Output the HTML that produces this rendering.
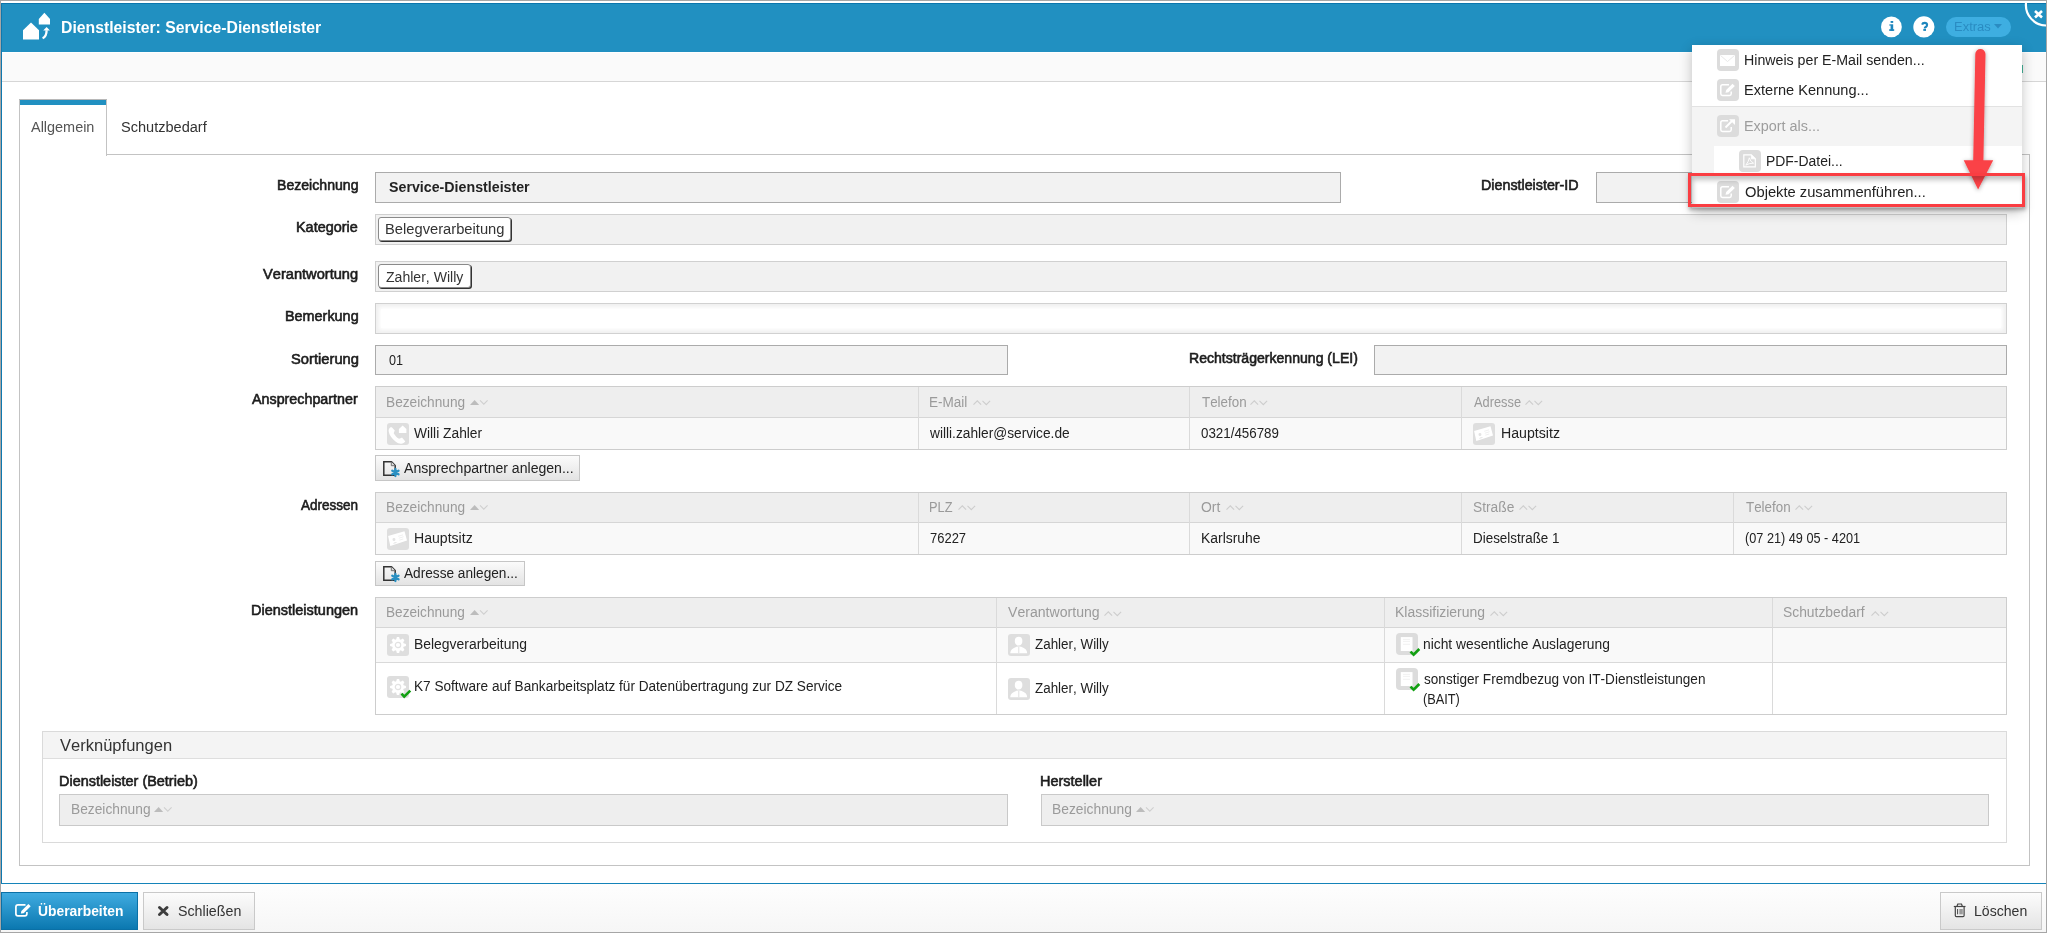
<!DOCTYPE html><html><head><meta charset="utf-8"><style>
html,body{margin:0;padding:0;}
body{width:2047px;height:933px;position:relative;overflow:hidden;background:#fff;font-family:"Liberation Sans",sans-serif;}
.t{position:absolute;white-space:nowrap;transform-origin:0 0;font-kerning:none;}
.b{position:absolute;box-sizing:border-box;}
svg{position:absolute;overflow:visible;}
</style></head><body>
<div class="b" style="left:0px;top:0px;width:2047px;height:933px;border:1px solid #a6a6a6;background:#fff;"></div>
<div class="b" style="left:1px;top:3px;width:2045px;height:49px;background:#2190c1;border-top:1px solid #0b76ad;"></div>
<div class="b" style="left:1px;top:3px;width:1px;height:881px;background:#0e78af;"></div>
<div class="b" style="left:2px;top:52px;width:2044px;height:30px;background:#fafafa;border-top:1px solid #fff;border-bottom:1px solid #d6d6d6;"></div>
<div class="b" style="left:1px;top:883px;width:2045px;height:1px;background:#1483b9;"></div>
<div class="b" style="left:1px;top:884px;width:2045px;height:48px;background:linear-gradient(#fefefe,#f6f6f6);"></div>
<svg style="left:0px;top:0px" width="60" height="50" viewBox="0 0 60 50"><path d="M23 30.2 L31 22.6 L39 30.2 L39 39.5 L23 39.5 Z" fill="#fff"/><path d="M38.8 19 L44.4 12.8 L50 19 L50 24.5 L38.8 24.5 Z" fill="#fff"/><path d="M42.6 38.2 Q46.6 36.5 46.6 30.2" stroke="#fff" stroke-width="2.3" fill="none"/><path d="M43.2 30.6 L46.6 26.9 L49.9 30.6 Z" fill="#fff"/></svg>
<div class="t" style="left:61.15px;top:16.50px;font-size:16.57px;line-height:22px;font-weight:700;color:#fff;transform:scaleX(0.9513);">Dienstleister: Service-Dienstleister</div>
<svg style="left:1870px;top:5px" width="180" height="50" viewBox="0 0 180 50"><circle cx="21.4" cy="21.9" r="10.4" fill="#fff"/><circle cx="53.9" cy="21.9" r="10.6" fill="#fff"/><rect x="76" y="12" width="65" height="20" rx="10" fill="#3eaee1"/></svg>
<svg style="left:1870px;top:0px" width="70" height="40" viewBox="0 0 70 40"><g fill="#1d86bd"><rect x="20.6" y="21" width="2.6" height="1.9"/><rect x="20.6" y="24.3" width="2.6" height="6.6"/><rect x="19.4" y="24.3" width="1.4" height="1.4"/><rect x="19.2" y="29.2" width="5" height="1.7"/><rect x="53.3" y="29" width="2.7" height="1.9"/></g><path d="M52.1 24.6 Q52.6 22.9 54.7 22.9 Q56.9 22.9 57.1 24.8 Q57.2 26.2 55.8 27 Q54.7 27.6 54.7 28.4" stroke="#1d86bd" stroke-width="2.1" fill="none"/></svg>
<div class="t" style="left:1954.34px;top:19.00px;font-size:12.50px;line-height:16px;color:#2a8cc2;transform:scaleX(1.0369);">Extras</div>
<svg style="left:1994px;top:24px" width="9" height="5" viewBox="0 0 9 5"><path d="M0 0 L8 0 L4 4.5 Z" fill="#2a8cc2"/></svg>
<svg style="left:2000px;top:0px" width="47" height="52" viewBox="0 0 47 52"><path d="M26 3 A20.5 20.5 0 0 0 46 25.5" stroke="#fff" stroke-width="2.2" fill="none"/><path d="M35 11 L42 17.5 M42 11 L35 17.5" stroke="#fff" stroke-width="2.6"/></svg>
<div class="b" style="left:19px;top:154px;width:2011px;height:712px;border:1px solid #c3c3c3;"></div>
<div class="b" style="left:19px;top:99px;width:88px;height:57px;background:#fff;border:1px solid #c3c3c3;border-bottom:none;border-top:none;"></div>
<div class="b" style="left:19px;top:99px;width:88px;height:1px;background:#b8b8b8;"></div>
<div class="b" style="left:20px;top:100px;width:86px;height:5px;background:#2190c1;"></div>
<div class="t" style="left:30.77px;top:117.50px;font-size:14.39px;line-height:19px;color:#555;transform:scaleX(1.0044);">Allgemein</div>
<div class="t" style="left:121.04px;top:117.50px;font-size:14.39px;line-height:19px;color:#333;transform:scaleX(1.0124);">Schutzbedarf</div>
<div class="t" style="left:277.14px;top:175.50px;font-size:14.39px;line-height:19px;-webkit-text-stroke:0.6px #1c1c1c;color:#1c1c1c;transform:scaleX(0.9803);">Bezeichnung</div>
<div class="t" style="left:296.42px;top:217.50px;font-size:14.39px;line-height:19px;-webkit-text-stroke:0.6px #1c1c1c;color:#1c1c1c;transform:scaleX(1.0037);">Kategorie</div>
<div class="t" style="left:263.34px;top:264.50px;font-size:14.39px;line-height:19px;-webkit-text-stroke:0.6px #1c1c1c;color:#1c1c1c;transform:scaleX(1.0173);">Verantwortung</div>
<div class="t" style="left:284.82px;top:306.50px;font-size:14.39px;line-height:19px;-webkit-text-stroke:0.6px #1c1c1c;color:#1c1c1c;transform:scaleX(1.0017);">Bemerkung</div>
<div class="t" style="left:290.53px;top:349.50px;font-size:14.39px;line-height:19px;-webkit-text-stroke:0.6px #1c1c1c;color:#1c1c1c;transform:scaleX(1.0245);">Sortierung</div>
<div class="t" style="left:251.97px;top:389.50px;font-size:14.39px;line-height:19px;-webkit-text-stroke:0.6px #1c1c1c;color:#1c1c1c;transform:scaleX(0.9942);">Ansprechpartner</div>
<div class="t" style="left:301.37px;top:495.50px;font-size:14.39px;line-height:19px;-webkit-text-stroke:0.6px #1c1c1c;color:#1c1c1c;transform:scaleX(0.9394);">Adressen</div>
<div class="t" style="left:251.31px;top:600.50px;font-size:14.39px;line-height:19px;-webkit-text-stroke:0.6px #1c1c1c;color:#1c1c1c;transform:scaleX(1.0079);">Dienstleistungen</div>
<div class="t" style="left:1481.33px;top:175.50px;font-size:14.39px;line-height:19px;-webkit-text-stroke:0.6px #1c1c1c;color:#1c1c1c;transform:scaleX(0.9939);">Dienstleister-ID</div>
<div class="t" style="left:1188.55px;top:348.50px;font-size:14.39px;line-height:19px;-webkit-text-stroke:0.6px #1c1c1c;color:#1c1c1c;transform:scaleX(0.9783);">Rechtsträgerkennung (LEI)</div>
<div class="b" style="left:375px;top:172px;width:966px;height:31px;background:#f2f2f2;border:1px solid #ababab;"></div>
<div class="t" style="left:388.99px;top:178.00px;font-size:13.95px;line-height:18px;font-weight:700;color:#222;transform:scaleX(1.0200);">Service-Dienstleister</div>
<div class="b" style="left:1596px;top:172px;width:411px;height:31px;background:#f2f2f2;border:1px solid #ababab;"></div>
<div class="b" style="left:375px;top:214px;width:1632px;height:31px;background:#f1f1f1;border:1px solid #d0d0d0;"></div>
<div class="b" style="left:375px;top:261px;width:1632px;height:31px;background:#f1f1f1;border:1px solid #d0d0d0;"></div>
<div class="b" style="left:375px;top:303px;width:1632px;height:31px;background:#f0f0f0;border:1px solid #cfcfcf;"></div>
<div class="b" style="left:381px;top:309px;width:1620px;height:19px;background:#fff;box-shadow:0 0 4px 2px #fff;"></div>
<div class="b" style="left:375px;top:345px;width:633px;height:30px;background:#f2f2f2;border:1px solid #ababab;"></div>
<div class="t" style="left:389.01px;top:350.50px;font-size:14.39px;line-height:19px;color:#222;transform:scaleX(0.8751);">01</div>
<div class="b" style="left:1374px;top:345px;width:633px;height:30px;background:#f2f2f2;border:1px solid #ababab;"></div>
<div class="b" style="left:378px;top:217px;width:133px;height:24px;background:#fff;border:1px solid #8a8a8a;border-radius:3px;box-shadow:1px 1px 0 #333;"></div>
<div class="t" style="left:384.89px;top:219.50px;font-size:14.39px;line-height:19px;color:#333;transform:scaleX(1.0236);">Belegverarbeitung</div>
<div class="b" style="left:378px;top:264px;width:93px;height:24px;background:#fff;border:1px solid #8a8a8a;border-radius:3px;box-shadow:1px 1px 0 #333;"></div>
<div class="t" style="left:385.65px;top:267.50px;font-size:14.39px;line-height:19px;color:#333;transform:scaleX(0.9776);">Zahler, Willy</div>
<div class="b" style="left:375px;top:386px;width:1632px;height:64px;border:1px solid #cdcdcd;background:#fff;"></div>
<div class="b" style="left:376px;top:387px;width:1630px;height:30px;background:#eeeeee;"></div>
<div class="b" style="left:376px;top:417px;width:1630px;height:1px;background:#d6d6d6;"></div>
<div class="b" style="left:376px;top:418px;width:1630px;height:31px;background:#f9f9f9;"></div>
<div class="b" style="left:918px;top:387px;width:1px;height:62px;background:#dadada;"></div>
<div class="b" style="left:1189px;top:387px;width:1px;height:62px;background:#dadada;"></div>
<div class="b" style="left:1461px;top:387px;width:1px;height:62px;background:#dadada;"></div>
<div class="t" style="left:386.48px;top:393.00px;font-size:13.95px;line-height:18px;color:#9a9a9a;transform:scaleX(0.9817);">Bezeichnung</div>
<svg style="left:469.7px;top:399.7px" width="20" height="8" viewBox="0 0 20 8"><path d="M0 5 L4.6 0 L9.2 5 Z" fill="#bcbcbc"/><path d="M10 0.3 L13.8 4.1 L17.6 0.3" stroke="#cfcfcf" stroke-width="1.1" fill="none"/></svg>
<div class="t" style="left:929.29px;top:393.00px;font-size:13.95px;line-height:18px;color:#9a9a9a;transform:scaleX(0.9717);">E-Mail</div>
<svg style="left:972.5px;top:400px" width="20" height="8" viewBox="0 0 20 8"><path d="M0.5 4.6 L4.3 0.8 L8.1 4.6" stroke="#cdcdcd" stroke-width="1.1" fill="none"/><path d="M9.5 0.8 L13.3 4.6 L17.1 0.8" stroke="#cdcdcd" stroke-width="1.1" fill="none"/></svg>
<div class="t" style="left:1201.60px;top:393.00px;font-size:13.95px;line-height:18px;color:#9a9a9a;transform:scaleX(0.9598);">Telefon</div>
<svg style="left:1250px;top:400px" width="20" height="8" viewBox="0 0 20 8"><path d="M0.5 4.6 L4.3 0.8 L8.1 4.6" stroke="#cdcdcd" stroke-width="1.1" fill="none"/><path d="M9.5 0.8 L13.3 4.6 L17.1 0.8" stroke="#cdcdcd" stroke-width="1.1" fill="none"/></svg>
<div class="t" style="left:1473.67px;top:393.00px;font-size:13.95px;line-height:18px;color:#9a9a9a;transform:scaleX(0.9200);">Adresse</div>
<svg style="left:1525px;top:400px" width="20" height="8" viewBox="0 0 20 8"><path d="M0.5 4.6 L4.3 0.8 L8.1 4.6" stroke="#cdcdcd" stroke-width="1.1" fill="none"/><path d="M9.5 0.8 L13.3 4.6 L17.1 0.8" stroke="#cdcdcd" stroke-width="1.1" fill="none"/></svg>
<svg style="left:387px;top:423px" width="22" height="22" viewBox="0 0 22 22"><rect x="0" y="0" width="22" height="22" rx="3" fill="#dedede"/><path d="M3.2 4.4 C2 5.2 1.5 6.6 1.7 8.6 C2.2 12 5 16 8.5 18.6 C10.5 20.1 12.5 20.9 14.2 20.8 C15.9 20.7 17.4 19.8 18.3 18.6 L15 14.6 C14.1 15.3 13.1 15.8 12.1 15.8 C10.2 15 8.2 12.9 6.7 10.3 C7 9.3 7.5 8.5 7.8 7.6 L4.8 4.2 C4.2 4.1 3.7 4.1 3.2 4.4 Z" fill="#fff"/><path d="M11.9 6 L15.65 2.5 L19.4 6 V10 H11.9 Z" fill="#fff"/></svg>
<div class="t" style="left:414.34px;top:423.50px;font-size:14.39px;line-height:19px;color:#222;transform:scaleX(0.9583);">Willi Zahler</div>
<div class="t" style="left:930.42px;top:423.50px;font-size:14.39px;line-height:19px;color:#222;transform:scaleX(0.9538);">willi.zahler@service.de</div>
<div class="t" style="left:1201.38px;top:423.50px;font-size:14.39px;line-height:19px;color:#222;transform:scaleX(0.9289);">0321/456789</div>
<svg style="left:1473px;top:423px" width="22" height="22" viewBox="0 0 22 22"><rect x="0" y="0" width="22" height="22" rx="3" fill="#dedede"/><path d="M1.1 8 L17.5 3.3 L20 12.5 L3.3 18.1 Z" fill="#fff"/><g transform="rotate(-17 11 11)"><circle cx="7" cy="10.3" r="1.5" fill="#e4e4e4"/><path d="M4.8 14.3 Q7 11.8 9.2 14.3 Z" fill="#e8e8e8"/><path d="M12 8.5 H17 M12 10.5 H17 M12 12.5 H16" stroke="#ededed" stroke-width="0.8"/></g></svg>
<div class="t" style="left:1500.54px;top:423.50px;font-size:14.39px;line-height:19px;color:#222;transform:scaleX(0.9847);">Hauptsitz</div>
<div class="b" style="left:375px;top:455px;width:205px;height:26px;background:linear-gradient(#fbfbfb,#e3e3e3);border:1px solid #c6c6c6;"></div>
<svg style="left:383px;top:461px" width="18" height="18" viewBox="0 0 18 18"><path d="M0.8 0.8 H8.5 L12.2 4.5 V14.2 H0.8 Z" fill="none" stroke="#333" stroke-width="1.5"/><path d="M8.3 0.8 V4.7 H12.2" fill="#ddd" stroke="#666" stroke-width="0.9"/><g transform="translate(12.4 11.5)" stroke="#2a90c2" stroke-width="2.3" stroke-linecap="round"><path d="M0 -3.6 V3.6 M-3.1 -1.8 L3.1 1.8 M-3.1 1.8 L3.1 -1.8"/></g></svg>
<div class="t" style="left:404.37px;top:458.50px;font-size:14.39px;line-height:19px;color:#222;transform:scaleX(0.9782);">Ansprechpartner anlegen...</div>
<div class="b" style="left:375px;top:561px;width:150px;height:25px;background:linear-gradient(#fbfbfb,#e3e3e3);border:1px solid #c6c6c6;"></div>
<svg style="left:383px;top:566px" width="18" height="18" viewBox="0 0 18 18"><path d="M0.8 0.8 H8.5 L12.2 4.5 V14.2 H0.8 Z" fill="none" stroke="#333" stroke-width="1.5"/><path d="M8.3 0.8 V4.7 H12.2" fill="#ddd" stroke="#666" stroke-width="0.9"/><g transform="translate(12.4 11.5)" stroke="#2a90c2" stroke-width="2.3" stroke-linecap="round"><path d="M0 -3.6 V3.6 M-3.1 -1.8 L3.1 1.8 M-3.1 1.8 L3.1 -1.8"/></g></svg>
<div class="t" style="left:404.37px;top:563.50px;font-size:14.39px;line-height:19px;color:#222;transform:scaleX(0.9490);">Adresse anlegen...</div>
<div class="b" style="left:375px;top:492px;width:1632px;height:63px;border:1px solid #cdcdcd;background:#fff;"></div>
<div class="b" style="left:376px;top:493px;width:1630px;height:29px;background:#eeeeee;"></div>
<div class="b" style="left:376px;top:522px;width:1630px;height:1px;background:#d6d6d6;"></div>
<div class="b" style="left:376px;top:523px;width:1630px;height:31px;background:#f9f9f9;"></div>
<div class="b" style="left:918px;top:493px;width:1px;height:61px;background:#dadada;"></div>
<div class="b" style="left:1189px;top:493px;width:1px;height:61px;background:#dadada;"></div>
<div class="b" style="left:1461px;top:493px;width:1px;height:61px;background:#dadada;"></div>
<div class="b" style="left:1733px;top:493px;width:1px;height:61px;background:#dadada;"></div>
<div class="t" style="left:386.48px;top:498.00px;font-size:13.95px;line-height:18px;color:#9a9a9a;transform:scaleX(0.9817);">Bezeichnung</div>
<svg style="left:469.7px;top:504.5px" width="20" height="8" viewBox="0 0 20 8"><path d="M0 5 L4.6 0 L9.2 5 Z" fill="#bcbcbc"/><path d="M10 0.3 L13.8 4.1 L17.6 0.3" stroke="#cfcfcf" stroke-width="1.1" fill="none"/></svg>
<div class="t" style="left:929.35px;top:498.00px;font-size:13.95px;line-height:18px;color:#9a9a9a;transform:scaleX(0.9204);">PLZ</div>
<svg style="left:958px;top:505px" width="20" height="8" viewBox="0 0 20 8"><path d="M0.5 4.6 L4.3 0.8 L8.1 4.6" stroke="#cdcdcd" stroke-width="1.1" fill="none"/><path d="M9.5 0.8 L13.3 4.6 L17.1 0.8" stroke="#cdcdcd" stroke-width="1.1" fill="none"/></svg>
<div class="t" style="left:1201.24px;top:498.00px;font-size:13.95px;line-height:18px;color:#9a9a9a;transform:scaleX(0.9992);">Ort</div>
<svg style="left:1226px;top:505px" width="20" height="8" viewBox="0 0 20 8"><path d="M0.5 4.6 L4.3 0.8 L8.1 4.6" stroke="#cdcdcd" stroke-width="1.1" fill="none"/><path d="M9.5 0.8 L13.3 4.6 L17.1 0.8" stroke="#cdcdcd" stroke-width="1.1" fill="none"/></svg>
<div class="t" style="left:1473.07px;top:498.00px;font-size:13.95px;line-height:18px;color:#9a9a9a;transform:scaleX(0.9872);">Straße</div>
<svg style="left:1519px;top:505px" width="20" height="8" viewBox="0 0 20 8"><path d="M0.5 4.6 L4.3 0.8 L8.1 4.6" stroke="#cdcdcd" stroke-width="1.1" fill="none"/><path d="M9.5 0.8 L13.3 4.6 L17.1 0.8" stroke="#cdcdcd" stroke-width="1.1" fill="none"/></svg>
<div class="t" style="left:1745.80px;top:498.00px;font-size:13.95px;line-height:18px;color:#9a9a9a;transform:scaleX(0.9598);">Telefon</div>
<svg style="left:1795px;top:505px" width="20" height="8" viewBox="0 0 20 8"><path d="M0.5 4.6 L4.3 0.8 L8.1 4.6" stroke="#cdcdcd" stroke-width="1.1" fill="none"/><path d="M9.5 0.8 L13.3 4.6 L17.1 0.8" stroke="#cdcdcd" stroke-width="1.1" fill="none"/></svg>
<svg style="left:387px;top:528px" width="22" height="22" viewBox="0 0 22 22"><rect x="0" y="0" width="22" height="22" rx="3" fill="#dedede"/><path d="M1.1 8 L17.5 3.3 L20 12.5 L3.3 18.1 Z" fill="#fff"/><g transform="rotate(-17 11 11)"><circle cx="7" cy="10.3" r="1.5" fill="#e4e4e4"/><path d="M4.8 14.3 Q7 11.8 9.2 14.3 Z" fill="#e8e8e8"/><path d="M12 8.5 H17 M12 10.5 H17 M12 12.5 H16" stroke="#ededed" stroke-width="0.8"/></g></svg>
<div class="t" style="left:414.04px;top:528.50px;font-size:14.39px;line-height:19px;color:#222;transform:scaleX(0.9796);">Hauptsitz</div>
<div class="t" style="left:929.73px;top:528.50px;font-size:14.39px;line-height:19px;color:#222;transform:scaleX(0.9027);">76227</div>
<div class="t" style="left:1200.76px;top:528.50px;font-size:14.39px;line-height:19px;color:#222;transform:scaleX(0.9688);">Karlsruhe</div>
<div class="t" style="left:1472.60px;top:528.50px;font-size:14.39px;line-height:19px;color:#222;transform:scaleX(0.9331);">Dieselstraße 1</div>
<div class="t" style="left:1744.81px;top:528.50px;font-size:14.39px;line-height:19px;color:#222;transform:scaleX(0.8835);">(07 21) 49 05 - 4201</div>
<div class="b" style="left:375px;top:597px;width:1632px;height:118px;border:1px solid #cdcdcd;background:#fff;"></div>
<div class="b" style="left:376px;top:598px;width:1630px;height:29px;background:#eeeeee;"></div>
<div class="b" style="left:376px;top:627px;width:1630px;height:1px;background:#d6d6d6;"></div>
<div class="b" style="left:376px;top:628px;width:1630px;height:34px;background:#f9f9f9;"></div>
<div class="b" style="left:376px;top:662px;width:1630px;height:1px;background:#d9d9d9;"></div>
<div class="b" style="left:376px;top:663px;width:1630px;height:51px;background:#fff;"></div>
<div class="b" style="left:996px;top:598px;width:1px;height:116px;background:#dadada;"></div>
<div class="b" style="left:1384px;top:598px;width:1px;height:116px;background:#dadada;"></div>
<div class="b" style="left:1772px;top:598px;width:1px;height:116px;background:#dadada;"></div>
<div class="t" style="left:386.48px;top:603.00px;font-size:13.95px;line-height:18px;color:#9a9a9a;transform:scaleX(0.9779);">Bezeichnung</div>
<svg style="left:469.7px;top:610px" width="20" height="8" viewBox="0 0 20 8"><path d="M0 5 L4.6 0 L9.2 5 Z" fill="#bcbcbc"/><path d="M10 0.3 L13.8 4.1 L17.6 0.3" stroke="#cfcfcf" stroke-width="1.1" fill="none"/></svg>
<div class="t" style="left:1008.04px;top:603.00px;font-size:13.95px;line-height:18px;color:#9a9a9a;transform:scaleX(1.0112);">Verantwortung</div>
<svg style="left:1104px;top:610.5px" width="20" height="8" viewBox="0 0 20 8"><path d="M0.5 4.6 L4.3 0.8 L8.1 4.6" stroke="#cdcdcd" stroke-width="1.1" fill="none"/><path d="M9.5 0.8 L13.3 4.6 L17.1 0.8" stroke="#cdcdcd" stroke-width="1.1" fill="none"/></svg>
<div class="t" style="left:1395.25px;top:603.00px;font-size:13.95px;line-height:18px;color:#9a9a9a;transform:scaleX(1.0021);">Klassifizierung</div>
<svg style="left:1490px;top:610.5px" width="20" height="8" viewBox="0 0 20 8"><path d="M0.5 4.6 L4.3 0.8 L8.1 4.6" stroke="#cdcdcd" stroke-width="1.1" fill="none"/><path d="M9.5 0.8 L13.3 4.6 L17.1 0.8" stroke="#cdcdcd" stroke-width="1.1" fill="none"/></svg>
<div class="t" style="left:1783.47px;top:603.00px;font-size:13.95px;line-height:18px;color:#9a9a9a;transform:scaleX(0.9937);">Schutzbedarf</div>
<svg style="left:1871px;top:610.5px" width="20" height="8" viewBox="0 0 20 8"><path d="M0.5 4.6 L4.3 0.8 L8.1 4.6" stroke="#cdcdcd" stroke-width="1.1" fill="none"/><path d="M9.5 0.8 L13.3 4.6 L17.1 0.8" stroke="#cdcdcd" stroke-width="1.1" fill="none"/></svg>
<svg style="left:387px;top:634px" width="22" height="22" viewBox="0 0 22 22"><rect x="0" y="0" width="22" height="22" rx="3" fill="#dedede"/><path d="M16.64 9.26 L18.92 9.88 L18.92 12.12 L16.64 12.74 L16.22 13.75 L17.39 15.81 L15.81 17.39 L13.75 16.22 L12.74 16.64 L12.12 18.92 L9.88 18.92 L9.26 16.64 L8.25 16.22 L6.19 17.39 L4.61 15.81 L5.78 13.75 L5.36 12.74 L3.08 12.12 L3.08 9.88 L5.36 9.26 L5.78 8.25 L4.61 6.19 L6.19 4.61 L8.25 5.78 L9.26 5.36 L9.88 3.08 L12.12 3.08 L12.74 5.36 L13.75 5.78 L15.81 4.61 L17.39 6.19 L16.22 8.25 Z" fill="#fff"/><circle cx="11" cy="11" r="2.7" fill="none" stroke="#e2e2e2" stroke-width="1.2"/></svg>
<div class="t" style="left:413.96px;top:634.50px;font-size:14.39px;line-height:19px;color:#222;transform:scaleX(0.9678);">Belegverarbeitung</div>
<svg style="left:1008px;top:634px" width="22" height="22" viewBox="0 0 22 22"><rect x="0" y="0" width="22" height="22" rx="3" fill="#dedede"/><ellipse cx="10.6" cy="7.1" rx="3.8" ry="4.4" fill="#fff"/><path d="M2.2 19.2 Q2.5 14.8 8.5 12.8 L10.8 12.4 L13.2 12.8 Q19 14.8 19.2 19.2 Z" fill="#fff"/><path d="M10.8 12.8 V19.2" stroke="#e0e0e0" stroke-width="1"/></svg>
<div class="t" style="left:1035.17px;top:634.50px;font-size:14.39px;line-height:19px;color:#222;transform:scaleX(0.9331);">Zahler, Willy</div>
<svg style="left:1396px;top:633px" width="22" height="22" viewBox="0 0 22 22"><rect x="0" y="0" width="22" height="22" rx="4" fill="#dcdcdc"/><rect x="4.8" y="4.1" width="11.7" height="13.9" fill="#fff"/><path d="M7 6.4 H14 M7 8.4 H14 M7 11.3 H14" stroke="#eeeeee" stroke-width="0.8"/><path d="M14.5 18.6 L17.6 21.6 L23.3 16" stroke="#12a012" stroke-width="2.7" fill="none"/></svg>
<div class="t" style="left:1423.28px;top:634.50px;font-size:14.39px;line-height:19px;color:#222;transform:scaleX(0.9621);">nicht wesentliche Auslagerung</div>
<svg style="left:387px;top:676px" width="22" height="22" viewBox="0 0 22 22"><rect x="0" y="0" width="22" height="22" rx="3" fill="#dedede"/><path d="M16.64 9.26 L18.92 9.88 L18.92 12.12 L16.64 12.74 L16.22 13.75 L17.39 15.81 L15.81 17.39 L13.75 16.22 L12.74 16.64 L12.12 18.92 L9.88 18.92 L9.26 16.64 L8.25 16.22 L6.19 17.39 L4.61 15.81 L5.78 13.75 L5.36 12.74 L3.08 12.12 L3.08 9.88 L5.36 9.26 L5.78 8.25 L4.61 6.19 L6.19 4.61 L8.25 5.78 L9.26 5.36 L9.88 3.08 L12.12 3.08 L12.74 5.36 L13.75 5.78 L15.81 4.61 L17.39 6.19 L16.22 8.25 Z" fill="#fff"/><circle cx="11" cy="11" r="2.7" fill="none" stroke="#e2e2e2" stroke-width="1.2"/><path d="M14.5 17.6 L17.2 20.6 L23.3 14.6" stroke="#12a012" stroke-width="2.6" fill="none"/></svg>
<div class="t" style="left:413.98px;top:676.50px;font-size:14.39px;line-height:19px;color:#222;transform:scaleX(0.9468);">K7 Software auf Bankarbeitsplatz für Datenübertragung zur DZ Service</div>
<svg style="left:1008px;top:678px" width="22" height="22" viewBox="0 0 22 22"><rect x="0" y="0" width="22" height="22" rx="3" fill="#dedede"/><ellipse cx="10.6" cy="7.1" rx="3.8" ry="4.4" fill="#fff"/><path d="M2.2 19.2 Q2.5 14.8 8.5 12.8 L10.8 12.4 L13.2 12.8 Q19 14.8 19.2 19.2 Z" fill="#fff"/><path d="M10.8 12.8 V19.2" stroke="#e0e0e0" stroke-width="1"/></svg>
<div class="t" style="left:1035.17px;top:678.50px;font-size:14.39px;line-height:19px;color:#222;transform:scaleX(0.9331);">Zahler, Willy</div>
<svg style="left:1396px;top:668px" width="22" height="22" viewBox="0 0 22 22"><rect x="0" y="0" width="22" height="22" rx="4" fill="#dcdcdc"/><rect x="4.8" y="4.1" width="11.7" height="13.9" fill="#fff"/><path d="M7 6.4 H14 M7 8.4 H14 M7 11.3 H14" stroke="#eeeeee" stroke-width="0.8"/><path d="M14.5 18.6 L17.6 21.6 L23.3 16" stroke="#12a012" stroke-width="2.7" fill="none"/></svg>
<div class="t" style="left:1423.82px;top:669.50px;font-size:14.39px;line-height:19px;color:#222;transform:scaleX(0.9444);">sonstiger Fremdbezug von IT-Dienstleistungen</div>
<div class="t" style="left:1423.41px;top:689.50px;font-size:14.39px;line-height:19px;color:#222;transform:scaleX(0.8873);">(BAIT)</div>
<div class="b" style="left:42px;top:731px;width:1965px;height:112px;border:1px solid #dadada;background:#fff;"></div>
<div class="b" style="left:43px;top:732px;width:1963px;height:26px;background:#f4f4f4;"></div>
<div class="b" style="left:43px;top:758px;width:1963px;height:1px;background:#dedede;"></div>
<div class="t" style="left:59.63px;top:734.50px;font-size:16.57px;line-height:22px;color:#333;transform:scaleX(0.9978);">Verknüpfungen</div>
<div class="t" style="left:58.52px;top:771.50px;font-size:14.39px;line-height:19px;-webkit-text-stroke:0.6px #1c1c1c;color:#1c1c1c;transform:scaleX(1.0039);">Dienstleister (Betrieb)</div>
<div class="t" style="left:1040.11px;top:771.50px;font-size:14.39px;line-height:19px;-webkit-text-stroke:0.6px #1c1c1c;color:#1c1c1c;transform:scaleX(1.0075);">Hersteller</div>
<div class="b" style="left:59px;top:794px;width:949px;height:32px;background:#eeeeee;border:1px solid #c9c9c9;"></div>
<div class="t" style="left:70.87px;top:800.00px;font-size:13.95px;line-height:18px;color:#9a9a9a;transform:scaleX(0.9868);">Bezeichnung</div>
<svg style="left:154.3px;top:807px" width="20" height="8" viewBox="0 0 20 8"><path d="M0 5 L4.6 0 L9.2 5 Z" fill="#bcbcbc"/><path d="M10 0.3 L13.8 4.1 L17.6 0.3" stroke="#cfcfcf" stroke-width="1.1" fill="none"/></svg>
<div class="b" style="left:1041px;top:794px;width:948px;height:32px;background:#eeeeee;border:1px solid #c9c9c9;"></div>
<div class="t" style="left:1051.96px;top:800.00px;font-size:13.95px;line-height:18px;color:#9a9a9a;transform:scaleX(0.9919);">Bezeichnung</div>
<svg style="left:1136px;top:807px" width="20" height="8" viewBox="0 0 20 8"><path d="M0 5 L4.6 0 L9.2 5 Z" fill="#bcbcbc"/><path d="M10 0.3 L13.8 4.1 L17.6 0.3" stroke="#cfcfcf" stroke-width="1.1" fill="none"/></svg>
<div class="b" style="left:1px;top:892px;width:137px;height:38px;background:linear-gradient(#3fabe0,#0b78b0);border:1px solid #0a70a6;"></div>
<svg style="left:15px;top:904px" width="17" height="13" viewBox="0 0 17 13"><path d="M10.5 0.9 H3 Q0.9 0.9 0.9 3 V9.8 Q0.9 11.9 3 11.9 H9.8 Q11.9 11.9 11.9 9.8 V8" stroke="#fff" stroke-width="1.7" fill="none"/><path d="M5.8 9.6 L6.4 7 L13.4 0 L15.7 2.3 L8.7 9.3 Z" fill="#fff"/></svg>
<div class="t" style="left:38.27px;top:901.50px;font-size:14.39px;line-height:19px;font-weight:700;color:#fff;transform:scaleX(0.9643);">Überarbeiten</div>
<div class="b" style="left:143px;top:892px;width:112px;height:38px;background:linear-gradient(#fcfcfc,#e4e4e4);border:1px solid #c9c9c9;"></div>
<svg style="left:158px;top:906px" width="11" height="10" viewBox="0 0 11 10"><path d="M1.5 1.5 L9 8.5 M9 1.5 L1.5 8.5" stroke="#3d3d3d" stroke-width="3" stroke-linecap="round"/></svg>
<div class="t" style="left:177.55px;top:901.50px;font-size:14.39px;line-height:19px;color:#333;transform:scaleX(0.9904);">Schließen</div>
<div class="b" style="left:1940px;top:892px;width:102px;height:38px;background:linear-gradient(#fcfcfc,#e4e4e4);border:1px solid #c9c9c9;"></div>
<svg style="left:1953px;top:903px" width="14" height="15" viewBox="0 0 14 15"><path d="M0.8 3.5 H12.5" stroke="#444" stroke-width="1.2"/><path d="M4 3.3 L4.8 1 H8.5 L9.3 3.3" stroke="#444" stroke-width="1.2" fill="none"/><path d="M2.3 3.8 V12.5 Q2.3 13.6 3.4 13.6 H10 Q11.1 13.6 11.1 12.5 V3.8" stroke="#444" stroke-width="1.2" fill="none"/><path d="M4.6 6 V11.3" stroke="#444" stroke-width="1"/><rect x="6.3" y="6" width="3.5" height="5.3" fill="#999"/></svg>
<div class="t" style="left:1973.64px;top:901.50px;font-size:14.39px;line-height:19px;color:#333;transform:scaleX(0.9792);">Löschen</div>
<div class="b" style="left:1692px;top:45px;width:330px;height:163px;background:#fff;box-shadow:0 4px 12px rgba(0,0,0,0.24);"></div>
<div class="b" style="left:2022px;top:65px;width:1px;height:8px;background:#3c9d86;"></div>
<div class="b" style="left:1692px;top:106px;width:330px;height:1px;background:#e2e2e2;"></div>
<div class="b" style="left:1692px;top:107px;width:330px;height:66px;background:#f4f4f4;"></div>
<div class="b" style="left:1714px;top:146px;width:308px;height:27px;background:#fff;"></div>
<svg style="left:1717px;top:49px" width="22" height="22" viewBox="0 0 22 22"><rect x="0" y="0" width="22" height="22" rx="4" fill="#dcdcdc"/><rect x="3" y="6" width="15" height="11" fill="#fff"/><path d="M3.5 6.5 L10.5 12.5 L17.5 6.5" stroke="#e8e8e8" stroke-width="1" fill="none"/></svg>
<div class="t" style="left:1744.13px;top:50.50px;font-size:14.39px;line-height:19px;color:#222;transform:scaleX(0.9870);">Hinweis per E-Mail senden...</div>
<svg style="left:1717px;top:79px" width="22" height="22" viewBox="0 0 22 22"><rect x="0" y="0" width="22" height="22" rx="4" fill="#dcdcdc"/><path d="M12 5.8 H5.5 Q3.8 5.8 3.8 7.5 V14.8 Q3.8 16.5 5.5 16.5 H12.5 Q14.2 16.5 14.2 14.8 V12.5" stroke="#fff" stroke-width="1.5" fill="none"/><path d="M8.5 13.8 L9.2 11 L15.5 4.7 L17.8 7 L11.5 13.3 Z" fill="#fff"/></svg>
<div class="t" style="left:1744.10px;top:80.50px;font-size:14.39px;line-height:19px;color:#222;transform:scaleX(1.0132);">Externe Kennung...</div>
<svg style="left:1717px;top:115px" width="22" height="22" viewBox="0 0 22 22"><rect x="0" y="0" width="22" height="22" rx="4" fill="#dcdcdc"/><path d="M11 5.8 H5.5 Q3.8 5.8 3.8 7.5 V14.8 Q3.8 16.5 5.5 16.5 H12.5 Q14.2 16.5 14.2 14.8 V12" stroke="#fff" stroke-width="1.5" fill="none"/><path d="M8.5 12.5 L15 6" stroke="#fff" stroke-width="1.8"/><path d="M12 4.2 L18 4.2 L18 10 Z" fill="#fff"/></svg>
<div class="t" style="left:1744.12px;top:116.50px;font-size:14.39px;line-height:19px;color:#9d9d9d;transform:scaleX(1.0016);">Export als...</div>
<svg style="left:1739px;top:150px" width="22" height="22" viewBox="0 0 22 22"><rect x="0" y="0" width="22" height="22" rx="4" fill="#dcdcdc"/><path d="M4.8 4.8 H12.3 L16.3 8.8 V16.9 H4.8 Z" fill="none" stroke="#fff" stroke-width="1.2"/><path d="M12.3 4.8 V8.8 H16.3" fill="#fff" stroke="#fff" stroke-width="0.8"/><path d="M6.8 15.2 Q9.8 11.5 10.3 7.8 Q11.2 11.8 14.6 13.2 Q10.2 13 6.8 15.2" stroke="#fff" stroke-width="0.9" fill="none"/></svg>
<div class="t" style="left:1765.56px;top:151.50px;font-size:14.39px;line-height:19px;color:#222;transform:scaleX(0.9692);">PDF-Datei...</div>
<svg style="left:1717px;top:181px" width="22" height="22" viewBox="0 0 22 22"><rect x="0" y="0" width="22" height="22" rx="4" fill="#dcdcdc"/><path d="M12 5.8 H5.5 Q3.8 5.8 3.8 7.5 V14.8 Q3.8 16.5 5.5 16.5 H12.5 Q14.2 16.5 14.2 14.8 V12.5" stroke="#fff" stroke-width="1.5" fill="none"/><path d="M8.5 13.8 L9.2 11 L15.5 4.7 L17.8 7 L11.5 13.3 Z" fill="#fff"/></svg>
<div class="t" style="left:1744.60px;top:182.50px;font-size:14.39px;line-height:19px;color:#222;transform:scaleX(1.0237);">Objekte zusammenführen...</div>
<svg style="left:1950px;top:40px" width="60" height="160" viewBox="0 0 60 160" >
<defs><filter id="sh" x="-50%" y="-20%" width="200%" height="140%"><feDropShadow dx="0" dy="1.2" stdDeviation="2" flood-color="#000" flood-opacity="0.36"/></filter></defs>
<g filter="url(#sh)">
<path d="M25.3 14 A5.1 5.1 0 0 1 35.5 14 L33.4 121 L23.2 121 Z" fill="#fa4246"/>
<path d="M13.7 120.2 L43.2 120.2 L28.1 149.5 Z" fill="#fa4246"/>
</g></svg>
<div class="b" style="left:1688px;top:173px;width:337px;height:34px;border:3px solid #fa3d42;box-shadow:1px 3px 4px rgba(0,0,0,0.3), inset 2px 4px 5px rgba(0,0,0,0.24);"></div>
</body></html>
